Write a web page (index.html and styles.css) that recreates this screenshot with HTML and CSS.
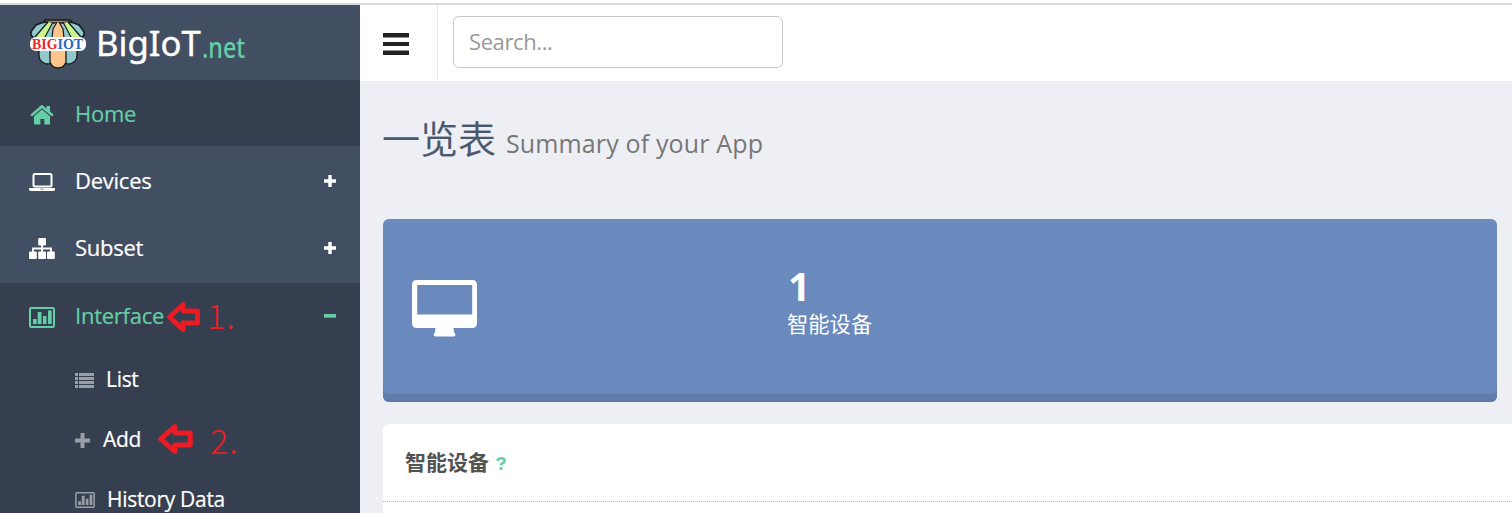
FILE: index.html
```html
<!DOCTYPE html>
<html lang="en">
<head>
<meta charset="utf-8">
<title>BigIoT.net</title>
<link rel="stylesheet" href="styles.css">
</head>
<body>
<svg class="defs" aria-hidden="true">
  <symbol id="chart" viewBox="0 0 26 21">
    <rect x="1" y="1" width="24" height="19" rx="1.2" fill="none" stroke="currentColor" stroke-width="2"/>
    <path fill="currentColor" d="M4 12h3.700v5H4zM8.700 5h3.800v12H8.700zM14 9h3.500v8H14zM19 3.500h3.700v13.500H19z"/>
  </symbol>
  <symbol id="arrow" viewBox="0 0 36 32">
    <path d="M3.500 16 17 3.500V10H31.500V22H17V28.500Z" fill="none" stroke="#ed1c24" stroke-width="4.800" stroke-linejoin="round"/>
  </symbol>
</svg>
<div class="app">
  <aside class="sidebar">
    <div class="brand">
      <svg class="logo" width="58" height="54" viewBox="0 0 58 54">
        <path d="M16 3h25l2 2-5 3H20l-5-3z" fill="#b8896a" stroke="#17191d" stroke-width="1.500"/>
        <path d="M10 31h12v15q-4 2-7 0-5-2-5-8zM36 31h12v7q0 6-5 8-3 2-7 0z" fill="#91c9cc" stroke="#17191d" stroke-width="1.300"/>
        <path d="M2 18Q1 15 4 12l3-4 5-2 5-1 7 1h9l7-1 5 1 5 2 3 4q3 3 2 6l-4 4H6z" fill="#91c9cc" stroke="#17191d" stroke-width="1.600"/>
        <path d="M7 20 19 5l5 1-8 15zM51 20 39 5l-5 1 8 15z" fill="#c9f58d"/>
        <path d="M24 22V12q0-5 4.500-7Q34 7 34 12v10z" fill="#ffc58d"/>
        <path d="M6 20 19 5M16 20 24 5M23 21l1-9 4-7M35 21l-1-9-4-7M42 20 34 5M52 20 39 5" fill="none" stroke="#17191d" stroke-width="1.200"/>
        <path d="M21 31h16v14q-2 6-8 6t-8-6z" fill="#ffc58d" stroke="#17191d" stroke-width="1.300"/>
        <rect x="1" y="20" width="56" height="14" rx="6" fill="#fff"/>
        <text x="3" y="32" class="logo-text" textLength="51" lengthAdjust="spacingAndGlyphs"><tspan fill="#f3262b">BIG</tspan><tspan fill="#2866c4">IOT</tspan></text>
      </svg>
      <span class="brand-name">BigIoT</span><span class="brand-tld">.net</span>
    </div>
    <nav>
      <a class="item home active">
        <svg class="icon" width="26" height="22" viewBox="0 0 26 22"><path fill="currentColor" d="M13 5.400 21 12.200v8.300h-5.700V15h-3.900v5.500H5v-8.300zM13 .8l4.500 3.800V2H21v5.600l3.700 3.100-1.700 1.900L13 4.200 3 12.600 1.300 10.700 11.800 1.500q1.200-1 2.400 0z"/></svg>
        <span class="label">Home</span>
      </a>
      <a class="item">
        <svg class="icon" width="26" height="22" viewBox="0 0 26 22"><rect x="4.500" y="3" width="18" height="12.500" rx="1.500" fill="none" stroke="currentColor" stroke-width="2"/><path fill="currentColor" fill-rule="evenodd" d="M0 17h26v1.500q0 1.500-2 1.500H2q-2 0-2-1.500zm11.500.8v.8h3v-.8z"/></svg>
        <span class="label">Devices</span>
        <svg class="toggle" width="12" height="12" viewBox="0 0 12 12"><path fill="currentColor" d="M4.300 0h3.400v4.300H12v3.400H7.700V12H4.300V7.700H0V4.300h4.300z"/></svg>
      </a>
      <a class="item">
        <svg class="icon" width="26" height="22" viewBox="0 0 26 22"><path d="M4 14v-3.500h18V14M13 6v8" fill="none" stroke="currentColor" stroke-width="1.800"/><g fill="currentColor"><rect x="9.200" y="0" width="7.800" height="7.500" rx="1"/><rect x="0" y="13.500" width="7.800" height="7.500" rx="1"/><rect x="9.200" y="13.500" width="7.800" height="7.500" rx="1"/><rect x="18" y="13.500" width="7.800" height="7.500" rx="1"/></g></svg>
        <span class="label">Subset</span>
        <svg class="toggle" width="12" height="12" viewBox="0 0 12 12"><path fill="currentColor" d="M4.300 0h3.400v4.300H12v3.400H7.700V12H4.300V7.700H0V4.300h4.300z"/></svg>
      </a>
      <a class="item active">
        <svg class="icon" width="26" height="21"><use href="#chart"/></svg>
        <span class="label interface">Interface</span>
        <svg class="toggle" width="12" height="12" viewBox="0 0 12 12"><path fill="currentColor" d="M0 4h12v3.700H0z"/></svg>
      </a>
      <div class="submenu">
        <a class="sub">
          <svg width="19" height="15" viewBox="0 0 19 15"><path fill="currentColor" d="M0 0h3v3H0zm4 0h15v3H4zM0 4h3v3H0zm4 0h15v3H4zM0 8h3v3H0zm4 0h15v3H4zM0 12h3v3H0zm4 0h15v3H4z"/></svg>
          <span class="list">List</span>
        </a>
        <a class="sub">
          <svg width="15" height="15" viewBox="0 0 15 15"><path fill="currentColor" d="M5.500 0h4v5.500H15v4H9.500V15h-4V9.500H0v-4h5.500z"/></svg>
          <span class="add">Add</span>
        </a>
        <a class="sub">
          <svg width="20" height="16"><use href="#chart"/></svg>
          <span class="history">History Data</span>
        </a>
      </div>
    </nav>
    <svg class="arrow arrow-one" width="36" height="32"><use href="#arrow"/></svg>
    <span class="note note-one">1.</span>
    <svg class="arrow arrow-two" width="38" height="32" viewBox="0 0 36 32" preserveAspectRatio="none"><use href="#arrow" width="36" height="32"/></svg>
    <span class="note note-two">2.</span>
  </aside>
  <div class="main">
    <header class="topbar">
      <div class="menu"><svg width="26" height="22" viewBox="0 0 26 22"><path fill="#222" d="M0 0h26v4.500H0zM0 9h26v4H0zM0 17.500h26V22H0z"/></svg></div>
      <input class="search" placeholder="Search...">
    </header>
    <section class="content">
      <h1>一览表 <small>Summary of your App</small></h1>
      <div class="stat">
        <svg width="66" height="57" viewBox="0 0 66 57"><path fill="#fff" fill-rule="evenodd" d="M5 0h55q5 0 5 5v38q0 5-5 5H41.500q0 4 2 6.500 0 2-2 2h-18q-2 0-2-2 2-2.500 2-6.500H5q-5 0-5-5V5q0-5 5-5zm.200 5v29.500h55V5z"/></svg>
        <div class="stat-text"><strong>1</strong><span>智能设备</span></div>
      </div>
      <div class="panel"><h2>智能设备 <svg width="10" height="13" viewBox="0 0 10 13"><path d="M1.300 3.800Q2.300 1.300 5 1.300q3.600 0 3.600 2.400 0 1.300-1.800 2.300Q5 7 5 8.600" fill="none" stroke="#65cea7" stroke-width="2.600"/><path fill="#65cea7" d="M3.600 10.100h2.800V13H3.600z"/></svg></h2></div>
    </section>
  </div>
</div>
</body>
</html>
```
FILE: styles.css
```css
* { box-sizing: border-box; }
body {
  margin: 0;
  height: 513px;
  padding-top: 3px;
  overflow: hidden;
  background: #fff;
  font-family: "Open Sans", "Noto Sans CJK SC", sans-serif;
}
.defs { display: none; }
.app {
  display: flex;
  height: 510px;
  border-top: 2px solid #dadada;
}
.sidebar {
  position: relative;
  width: 360px;
  flex: none;
  background: #424f63;
  color: #fff;
}
.brand {
  display: flex;
  align-items: flex-start;
  height: 75px;
  padding: 12px 0 0 29px;
}
.logo { flex: none; }
.logo-text { font: bold 15px "Liberation Serif", serif; }
.brand-name {
  width: 106px;
  margin-left: 9px;
  font: 400 35px/52px "Noto Sans", sans-serif;
  -webkit-text-stroke: .4px #fff;
  transform: scaleX(.99);
  transform-origin: left;
}
.brand-tld {
  width: 44px;
  color: #65cea7;
  font: 500 28px/60px "Noto Sans", sans-serif;
  transform: scaleX(.83);
  transform-origin: left;
}
.item {
  display: flex;
  align-items: center;
  height: 68px;
  padding: 0 24px 0 29px;
  font-size: 22px;
}
.item.home { height: 66px; }
.item:nth-child(3) { height: 69px; padding-bottom: 2px; }
.item:nth-child(4) { height: 67px; padding-bottom: 2px; }
.item .label { margin: -1px 0 0 20px; letter-spacing: -.25px; -webkit-text-stroke: .2px; }
.icon { flex: none; margin-top: 3px; }
.toggle { margin-left: auto; }
.item:nth-child(2) .toggle { margin-top: 2px; }
.active { background: #353f4f; color: #65cea7; }
.submenu { height: 163px; background: #353f4f; }
.sub {
  display: flex;
  align-items: center;
  height: 60px;
  padding-left: 75px;
  font-size: 21px;
  line-height: 24px;
}
.sub:last-child { height: 43px; padding-top: 17px; align-items: flex-start; }
.sub:last-child svg { margin-top: 5px; }
.sub svg { flex: none; color: #999fa7; }
.sub span { margin: -2px 0 0 12px; letter-spacing: -.3px; -webkit-text-stroke: .2px; }
.sub .add { margin-left: 13px; }
.sub .history { margin-top: 0; }
.arrow { position: absolute; }
.arrow-one { left: 166px; top: 296px; }
.arrow-two { left: 157px; top: 418px; }
.note {
  position: absolute;
  color: #ed1c24;
  font-family: "Noto Sans CJK SC", sans-serif;
  font-size: 34px;
  font-weight: 300;
  line-height: 40px;
  letter-spacing: 1px;
}
.note-one { left: 207px; top: 290px; }
.note-two { left: 210px; top: 415px; }
.main { flex: 1; min-width: 0; background: #eeeff4; }
.topbar {
  display: flex;
  height: 76px;
  background: #fff;
}
.menu {
  width: 78px;
  height: 75px;
  padding: 28px 0 0 23px;
  border-right: 1px solid #e7e7e7;
}
.menu svg { display: block; }
.search {
  width: 330px;
  height: 52px;
  margin: 11px 0 0 15px;
  padding: 0 16px 2px 15px;
  border: 1px solid #c8c8c8;
  border-radius: 6px;
  font: 22px "Open Sans", sans-serif;
  letter-spacing: -.4px;
}
.search::placeholder { color: #999; opacity: 1; }
.content { padding: 0 0 0 23px; }
h1 {
  height: 138px;
  margin: 0 0 0 -1px;
  padding-top: 30px;
  color: #49586e;
  font: 350 38px/54px "Open Sans", "Noto Sans CJK SC", sans-serif;
  -webkit-text-stroke: .2px;
}
small { color: #777; font-size: 25px; font-weight: 400; letter-spacing: .15px; -webkit-text-stroke: 0; }
.stat {
  display: flex;
  height: 183px;
  margin-right: 15px;
  padding: 61px 0 0 29px;
  border-radius: 6px;
  background: #6a8abe;
  box-shadow: inset 0 -8px 0 #5f7cab;
  color: #fff;
}
.stat svg { flex: none; }
.stat-text { display: flex; flex-direction: column; margin: -20px 0 0 310px; }
.stat-text strong { font-size: 39px; line-height: 51px; }
.stat-text span { font-size: 21.3px; line-height: 26px; margin-left: -1px; }
.panel { height: 89px; margin-top: 22px; border-radius: 6px 0 0; background: #fff; }
h2 {
  height: 78px;
  margin: 0;
  padding-left: 22px;
  border-bottom: 1px dotted #b8b8b8;
  color: #535351;
  font: bold 21px/77px "Open Sans", "Noto Sans CJK SC", sans-serif;
}
h2 svg { margin-left: 2px; }
```
